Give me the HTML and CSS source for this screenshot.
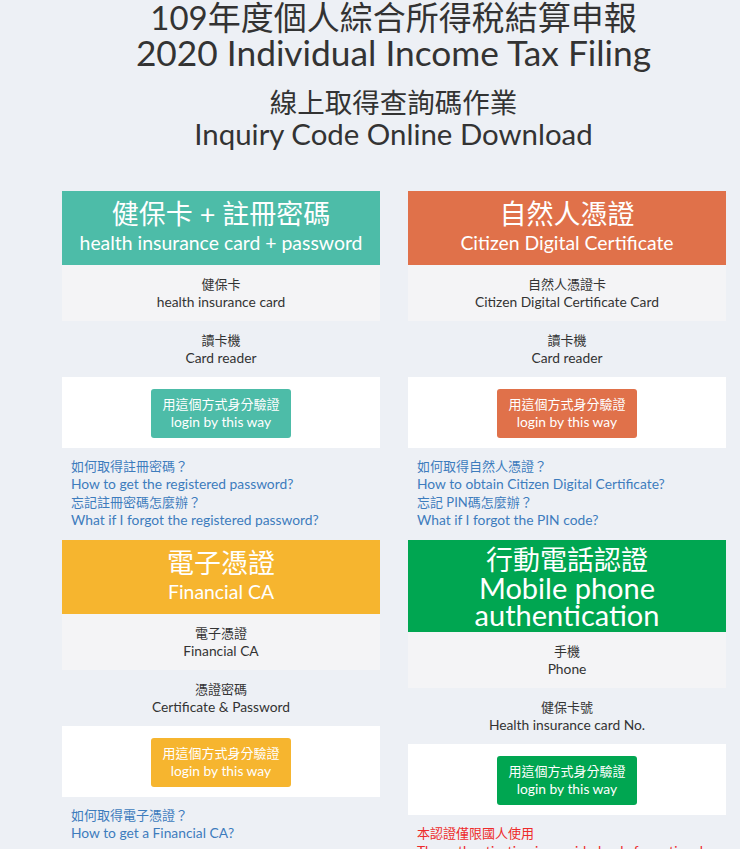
FILE: index.html
```html
<!DOCTYPE html>
<html lang="zh-Hant">
<head>
<meta charset="utf-8">
<title>109年度個人綜合所得稅結算申報</title>
<link rel="stylesheet" href="styles.css">
</head>
<body>
<header class="titles">
  <h1 class="title">
    <span class="t-zh">109年度個人綜合所得稅結算申報</span>
    <span class="t-en">2020 Individual Income Tax Filing</span>
  </h1>
  <h2 class="subtitle">
    <span class="s-zh">線上取得查詢碼作業</span>
    <span class="s-en">Inquiry Code Online Download</span>
  </h2>
</header>

<main class="grid">
  <section class="card teal">
    <div class="card-head">
      <div class="h-zh">健保卡 + 註冊密碼</div>
      <div class="h-en">health insurance card + password</div>
    </div>
    <div class="sec gray">
      <div class="zh">健保卡</div>
      <div class="en">health insurance card</div>
    </div>
    <div class="sec">
      <div class="zh">讀卡機</div>
      <div class="en">Card reader</div>
    </div>
    <div class="act">
      <a class="btn" href="#"><span class="zh">用這個方式身分驗證</span><span class="en">login by this way</span></a>
    </div>
    <div class="links">
      <a href="#" class="zh">如何取得註冊密碼？</a>
      <a href="#" class="en">How to get the registered password?</a>
      <a href="#" class="zh">忘記註冊密碼怎麼辦？</a>
      <a href="#" class="en">What if I forgot the registered password?</a>
    </div>
  </section>

  <section class="card orange">
    <div class="card-head">
      <div class="h-zh">自然人憑證</div>
      <div class="h-en">Citizen Digital Certificate</div>
    </div>
    <div class="sec gray">
      <div class="zh">自然人憑證卡</div>
      <div class="en">Citizen Digital Certificate Card</div>
    </div>
    <div class="sec">
      <div class="zh">讀卡機</div>
      <div class="en">Card reader</div>
    </div>
    <div class="act">
      <a class="btn" href="#"><span class="zh">用這個方式身分驗證</span><span class="en">login by this way</span></a>
    </div>
    <div class="links">
      <a href="#" class="zh">如何取得自然人憑證？</a>
      <a href="#" class="en">How to obtain Citizen Digital Certificate?</a>
      <a href="#" class="zh">忘記 PIN碼怎麼辦？</a>
      <a href="#" class="en">What if I forgot the PIN code?</a>
    </div>
  </section>

  <section class="card yellow">
    <div class="card-head">
      <div class="h-zh">電子憑證</div>
      <div class="h-en">Financial CA</div>
    </div>
    <div class="sec gray">
      <div class="zh">電子憑證</div>
      <div class="en">Financial CA</div>
    </div>
    <div class="sec">
      <div class="zh">憑證密碼</div>
      <div class="en">Certificate &amp; Password</div>
    </div>
    <div class="act">
      <a class="btn" href="#"><span class="zh">用這個方式身分驗證</span><span class="en">login by this way</span></a>
    </div>
    <div class="links">
      <a href="#" class="zh">如何取得電子憑證？</a>
      <a href="#" class="en">How to get a Financial CA?</a>
    </div>
  </section>

  <section class="card green">
    <div class="card-head tall">
      <div class="h-zh">行動電話認證</div>
      <div class="h-en">Mobile phone</div>
      <div class="h-en">authentication</div>
    </div>
    <div class="sec gray">
      <div class="zh">手機</div>
      <div class="en">Phone</div>
    </div>
    <div class="sec">
      <div class="zh">健保卡號</div>
      <div class="en">Health insurance card No.</div>
    </div>
    <div class="act">
      <a class="btn" href="#"><span class="zh">用這個方式身分驗證</span><span class="en">login by this way</span></a>
    </div>
    <div class="links notice">
      <div class="zh">本認證僅限國人使用</div>
      <div class="en">The authentication is provided only for nationals.</div>
    </div>
  </section>
</main>
</body>
</html>
```

FILE: styles.css
```css
html, body {
  margin: 0;
  padding: 0;
  background: #edf0f5;
}
body {
  font-family: "Lato", "Noto Sans CJK TC", sans-serif;
  color: #333;
}

.titles {
  padding-left: 47px;
  text-align: center;
  color: #333;
}
.title {
  margin: 0;
  font-weight: normal;
}
.title span, .subtitle span { display: block; }
.t-zh {
  font-size: 33px;
  line-height: 35px;
}
.t-en {
  font-size: 35.3px;
  line-height: 35px;
}
.subtitle {
  margin: 17px 0 0;
  font-weight: normal;
}
.s-zh {
  font-size: 27.5px;
  line-height: 31px;
}
.s-en {
  font-size: 29.4px;
  line-height: 31px;
}

.grid {
  display: grid;
  grid-template-columns: 318px 318px;
  column-gap: 28px;
  row-gap: 11px;
  padding-left: 62px;
  margin-top: 42px;
  align-items: start;
}

.card-head {
  color: #fff;
  text-align: center;
  padding: 8px 6px 9px;
}
.card-head .h-zh {
  font-size: 27px;
  line-height: 30px;
}
.card-head .h-en {
  font-size: 19.4px;
  line-height: 27px;
}
.card-head.tall {
  padding: 6px 6px 4px;
}
.card-head.tall .h-zh { line-height: 28px; }
.card-head.tall .h-en {
  font-size: 29px;
  line-height: 27px;
}

.teal .card-head, .teal .btn { background: #4dbca8; }
.orange .card-head, .orange .btn { background: #e0714a; }
.yellow .card-head, .yellow .btn { background: #f6b52f; }
.green .card-head, .green .btn { background: #00a651; }

.sec {
  padding: 10px 8px;
  text-align: center;
  color: #333;
}
.sec.gray { background: #f4f4f6; }
.zh {
  font-size: 13px;
  line-height: 18px;
}
.en {
  font-size: 13.8px;
  line-height: 18px;
}
.sec .zh, .sec .en { display: block; }

.act {
  background: #fff;
  padding: 12px 0 10px;
  display: flex;
  justify-content: center;
}
.btn {
  display: flex;
  flex-direction: column;
  align-items: center;
  padding: 6px 11px 7px;
  border-radius: 3px;
  color: #fff;
  text-decoration: none;
}

.links {
  padding: 9px 9px 0;
  display: flex;
  flex-direction: column;
  align-items: flex-start;
}
.links a {
  color: #3d7cbd;
  text-decoration: none;
}
.notice { color: #ee2b2b; }
```
